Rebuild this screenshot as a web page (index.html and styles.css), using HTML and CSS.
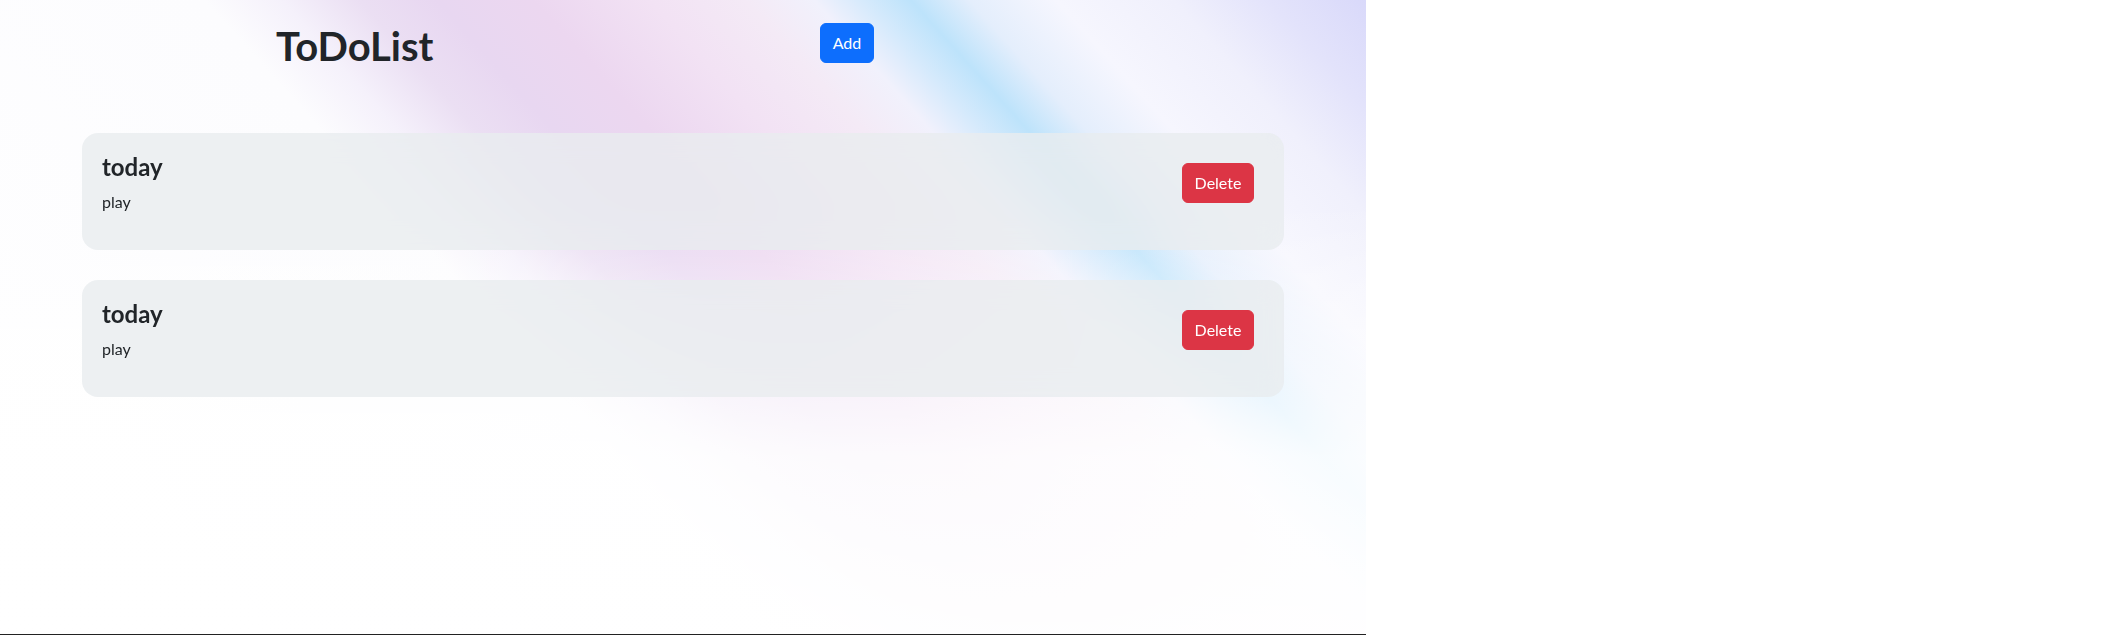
FILE: index.html
```html
<!DOCTYPE html>
<html lang="en">
<head>
<meta charset="utf-8">
<title>ToDoList</title>
<link rel="stylesheet" href="styles.css">
</head>
<body>
<div class="stage">
  <header class="header">
    <h1 class="title">ToDoList</h1>
    <button class="btn btn-primary" type="button">Add</button>
  </header>
  <main class="list">
    <section class="card">
      <div class="card-body">
        <h4 class="card-title">today</h4>
        <p class="card-text">play</p>
      </div>
      <button class="btn btn-danger" type="button">Delete</button>
    </section>
    <section class="card">
      <div class="card-body">
        <h4 class="card-title">today</h4>
        <p class="card-text">play</p>
      </div>
      <button class="btn btn-danger" type="button">Delete</button>
    </section>
  </main>
</div>
</body>
</html>
```
FILE: styles.css
```css
html, body {
  margin: 0;
  padding: 0;
  background: #ffffff;
}

body {
  font-family: "Lato", "Noto Sans", "Liberation Sans", sans-serif;
  color: #212529;
}

.stage {
  width: 1366px;
  height: 634px;
  border-bottom: 1px solid #222222;
  background:
    linear-gradient(to bottom,
      rgba(255,255,255,0) 0%,
      rgba(255,255,255,0) 32%,
      rgba(255,255,255,0.5) 52%,
      rgba(255,255,255,0.88) 72%,
      rgba(255,255,255,0.97) 100%),
    linear-gradient(48deg,
      #ffffff 0%,
      #fcfcfe 40%,
      #f5f1fb 44%,
      #ebdff3 48%,
      #e8d7f1 52%,
      #ecd7f0 57%,
      #f2e2f4 63%,
      #f4eaf6 68%,
      #f1f1fc 71.5%,
      #d6eafc 74%,
      #bde3fb 76.5%,
      #e4eefc 79.5%,
      #f6f6fe 84%,
      #f0f0fc 90%,
      #e3e3fb 95%,
      #d9d9fa 100%);
}

.header {
  display: flex;
  align-items: flex-start;
  padding: 22px 0 0 276px;
}

.title {
  width: 544px;
  margin: 0;
  font-size: 40px;
  line-height: 48px;
  font-weight: 700;
  color: #212529;
}

.btn {
  font-family: inherit;
  font-size: 16px;
  line-height: 24px;
  padding: 7px 12px;
  border: 1px solid transparent;
  border-radius: 6px;
  color: #ffffff;
  cursor: pointer;
}

.btn-primary {
  margin-top: 1px;
  width: 54px;
  padding-left: 0;
  padding-right: 0;
  background: #0d6efd;
  border-color: #0d6efd;
}

.btn-danger {
  margin: 10px 10px 0 0;
  width: 72px;
  padding-left: 0;
  padding-right: 0;
  background: #dc3545;
  border-color: #dc3545;
}

.list {
  display: flex;
  flex-direction: column;
  gap: 30px;
  padding: 63px 82px 0;
}

.card {
  display: flex;
  justify-content: space-between;
  align-items: flex-start;
  padding: 20px;
  border-radius: 16px;
  background: rgba(233, 236, 239, 0.8);
  backdrop-filter: blur(12px);
}

.card-title {
  margin: 0 0 8px;
  font-size: 24px;
  line-height: 28.8px;
  font-weight: 700;
  color: #212529;
}

.card-text {
  margin: 0 0 16px;
  font-size: 16px;
  line-height: 24px;
  color: #212529;
}
```
